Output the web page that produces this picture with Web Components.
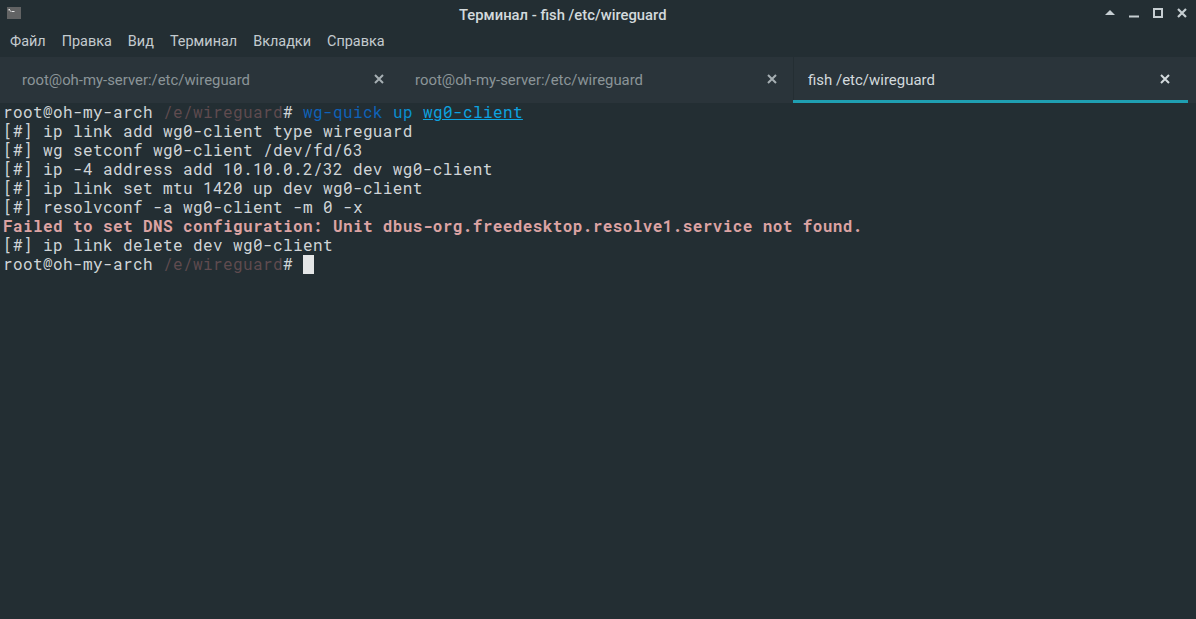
<!DOCTYPE html>
<html>
<head>
<meta charset="utf-8">
<title>Терминал</title>
<style>
  html, body { margin: 0; height: 100%; background: #232e33; }
  body { font-family: Roboto, "Noto Sans", sans-serif; overflow: hidden; }
</style>
</head>
<body>
<term-window>
  <title-bar slot="title">Терминал - fish /etc/wireguard</title-bar>
  <menu-bar slot="menu">
    <span>Файл</span><span>Правка</span><span>Вид</span><span>Терминал</span><span>Вкладки</span><span>Справка</span>
  </menu-bar>
  <tab-bar slot="tabs">
    <term-tab>root@oh-my-server:/etc/wireguard</term-tab>
    <term-tab>root@oh-my-server:/etc/wireguard</term-tab>
    <term-tab active>fish /etc/wireguard</term-tab>
  </tab-bar>
  <term-output slot="output"></term-output>
</term-window>

<script>
class TermWindow extends HTMLElement {
  constructor() {
    super();
    this.attachShadow({ mode: 'open' });
    this.shadowRoot.innerHTML = `
      <style>
        :host { display: flex; flex-direction: column; width: 1196px; height: 619px; background: #232e33; }
      </style>
      <slot name="title"></slot>
      <slot name="menu"></slot>
      <slot name="tabs"></slot>
      <slot name="output"></slot>
    `;
  }
}

class TitleBar extends HTMLElement {
  constructor() {
    super();
    this.attachShadow({ mode: 'open' });
    this.shadowRoot.innerHTML = `
      <style>
        :host { display: flex; align-items: center; height: 28px; position: relative; color: #d3dadd; font: 500 14.8px Roboto, sans-serif; }
        .icon { margin-left: 7px; width: 14px; height: 12px; background: #626364; position: relative; top: -1px; flex: none; }
        .icon svg { display: block; }
        .text { position: absolute; left: 459px; top: 6px; line-height: 18px; white-space: nowrap; }
        .buttons { margin-left: auto; }
        .buttons svg { display: block; }
      </style>
      <div class="icon">
        <svg width="14" height="12" viewBox="0 0 14 12"><path d="M1.5 2h1.5v1.5h-1.5zM3 3.5h1v1h-1zM4.5 4h3v1h-3z" fill="#e4e4e4"/></svg>
      </div>
      <div class="text"><slot></slot></div>
      <div class="buttons">
        <svg width="96" height="28" viewBox="0 0 96 28">
          <path d="M5 15l5-5 5 5z" fill="#c6ced2"/>
          <path d="M29 16.5h10" stroke="#c6ced2" stroke-width="2" fill="none"/>
          <rect x="54" y="9" width="8" height="8" stroke="#c6ced2" stroke-width="2" fill="none"/>
          <path d="M78 9l8 8M86 9l-8 8" stroke="#c6ced2" stroke-width="2.2" fill="none"/>
        </svg>
      </div>
    `;
  }
}

class MenuBar extends HTMLElement {
  constructor() {
    super();
    this.attachShadow({ mode: 'open' });
    this.shadowRoot.innerHTML = `
      <style>
        :host { display: flex; align-items: center; gap: 16px; box-sizing: border-box; height: 28px; padding: 0 0 1px 10px; color: #c3cbcf; font: 400 14.45px Roboto, sans-serif; }
        ::slotted(span) { line-height: 18px; }
      </style>
      <slot></slot>
    `;
  }
}

class TabBar extends HTMLElement {
  constructor() {
    super();
    this.attachShadow({ mode: 'open' });
    this.shadowRoot.innerHTML = `
      <style>
        :host { display: flex; height: 46px; margin-top: 1px; padding: 0 8px 0 7px; background: #2a343a; }
      </style>
      <slot></slot>
    `;
  }
}

class TermTab extends HTMLElement {
  constructor() {
    super();
    this.attachShadow({ mode: 'open' });
    this.shadowRoot.innerHTML = `
      <style>
        :host { display: flex; align-items: center; box-sizing: border-box; width: 393px; height: 46px; padding: 3px 16px 0 15px; color: #8b9498; font: 400 14.9px Roboto, sans-serif; border-bottom: 3px solid transparent; }
        :host([active]) { width: 395px; padding-right: 18px; font-size: 14.98px; color: #d3dadd; border-bottom-color: #1f9fb2; box-shadow: inset 1px 0 #242e33; }
        .label { flex: 1; white-space: nowrap; }
        svg { display: block; flex: none; color: #a6afb3; margin-top: -2px; }
        :host([active]) svg { color: #d3dadd; }
      </style>
      <span class="label"><slot></slot></span>
      <svg width="10" height="10" viewBox="0 0 10 10"><path d="M1 1l8 8M9 1l-8 8" stroke="currentColor" stroke-width="2" fill="none"/></svg>
    `;
  }
}

// one entry per line: [text, class]
const LINES = [
  [['root@oh-my-arch ', ''], ['/e/wireguard', 'path'], ['# ', ''], ['wg-quick', 'cmd'], [' ', ''], ['up', 'arg'], [' ', ''], ['wg0-client', 'file']],
  [['[#] ip link add wg0-client type wireguard', '']],
  [['[#] wg setconf wg0-client /dev/fd/63', '']],
  [['[#] ip -4 address add 10.10.0.2/32 dev wg0-client', '']],
  [['[#] ip link set mtu 1420 up dev wg0-client', '']],
  [['[#] resolvconf -a wg0-client -m 0 -x', '']],
  [['Failed to set DNS configuration: Unit dbus-org.freedesktop.resolve1.service not found.', 'err']],
  [['[#] ip link delete dev wg0-client', '']],
  [['root@oh-my-arch ', ''], ['/e/wireguard', 'path'], ['# ', ''], ['', 'cursor']],
];

class TermOutput extends HTMLElement {
  constructor() {
    super();
    this.attachShadow({ mode: 'open' });
    const html = LINES.map(line => {
      return '<div>' + line.map(p => '<span class="' + p[1] + '">' + p[0] + '</span>').join('') + '</div>';
    }).join('');
    this.shadowRoot.innerHTML = `
      <style>
        :host { display: block; flex: 1; padding: 0 3px; color: #d0d5d8; font: 400 16px/17px "Roboto Mono", "DejaVu Sans Mono", "Liberation Mono", monospace; letter-spacing: .395px; }
        div { height: 19px; white-space: pre; }
        .path { color: #5f4b4f; }
        .cmd { color: #0f62b8; }
        .arg { color: #0a8fd0; }
        .file { color: #0da3e0; text-decoration: underline; }
        .err { color: #dca3a3; font-weight: 700; }
        .cursor { display: inline-block; width: 11px; height: 19px; background: #e4e6e7; vertical-align: top; }
      </style>
      ${html}
    `;
  }
}

customElements.define('term-window', TermWindow);
customElements.define('title-bar', TitleBar);
customElements.define('menu-bar', MenuBar);
customElements.define('tab-bar', TabBar);
customElements.define('term-tab', TermTab);
customElements.define('term-output', TermOutput);
</script>
</body>
</html>
